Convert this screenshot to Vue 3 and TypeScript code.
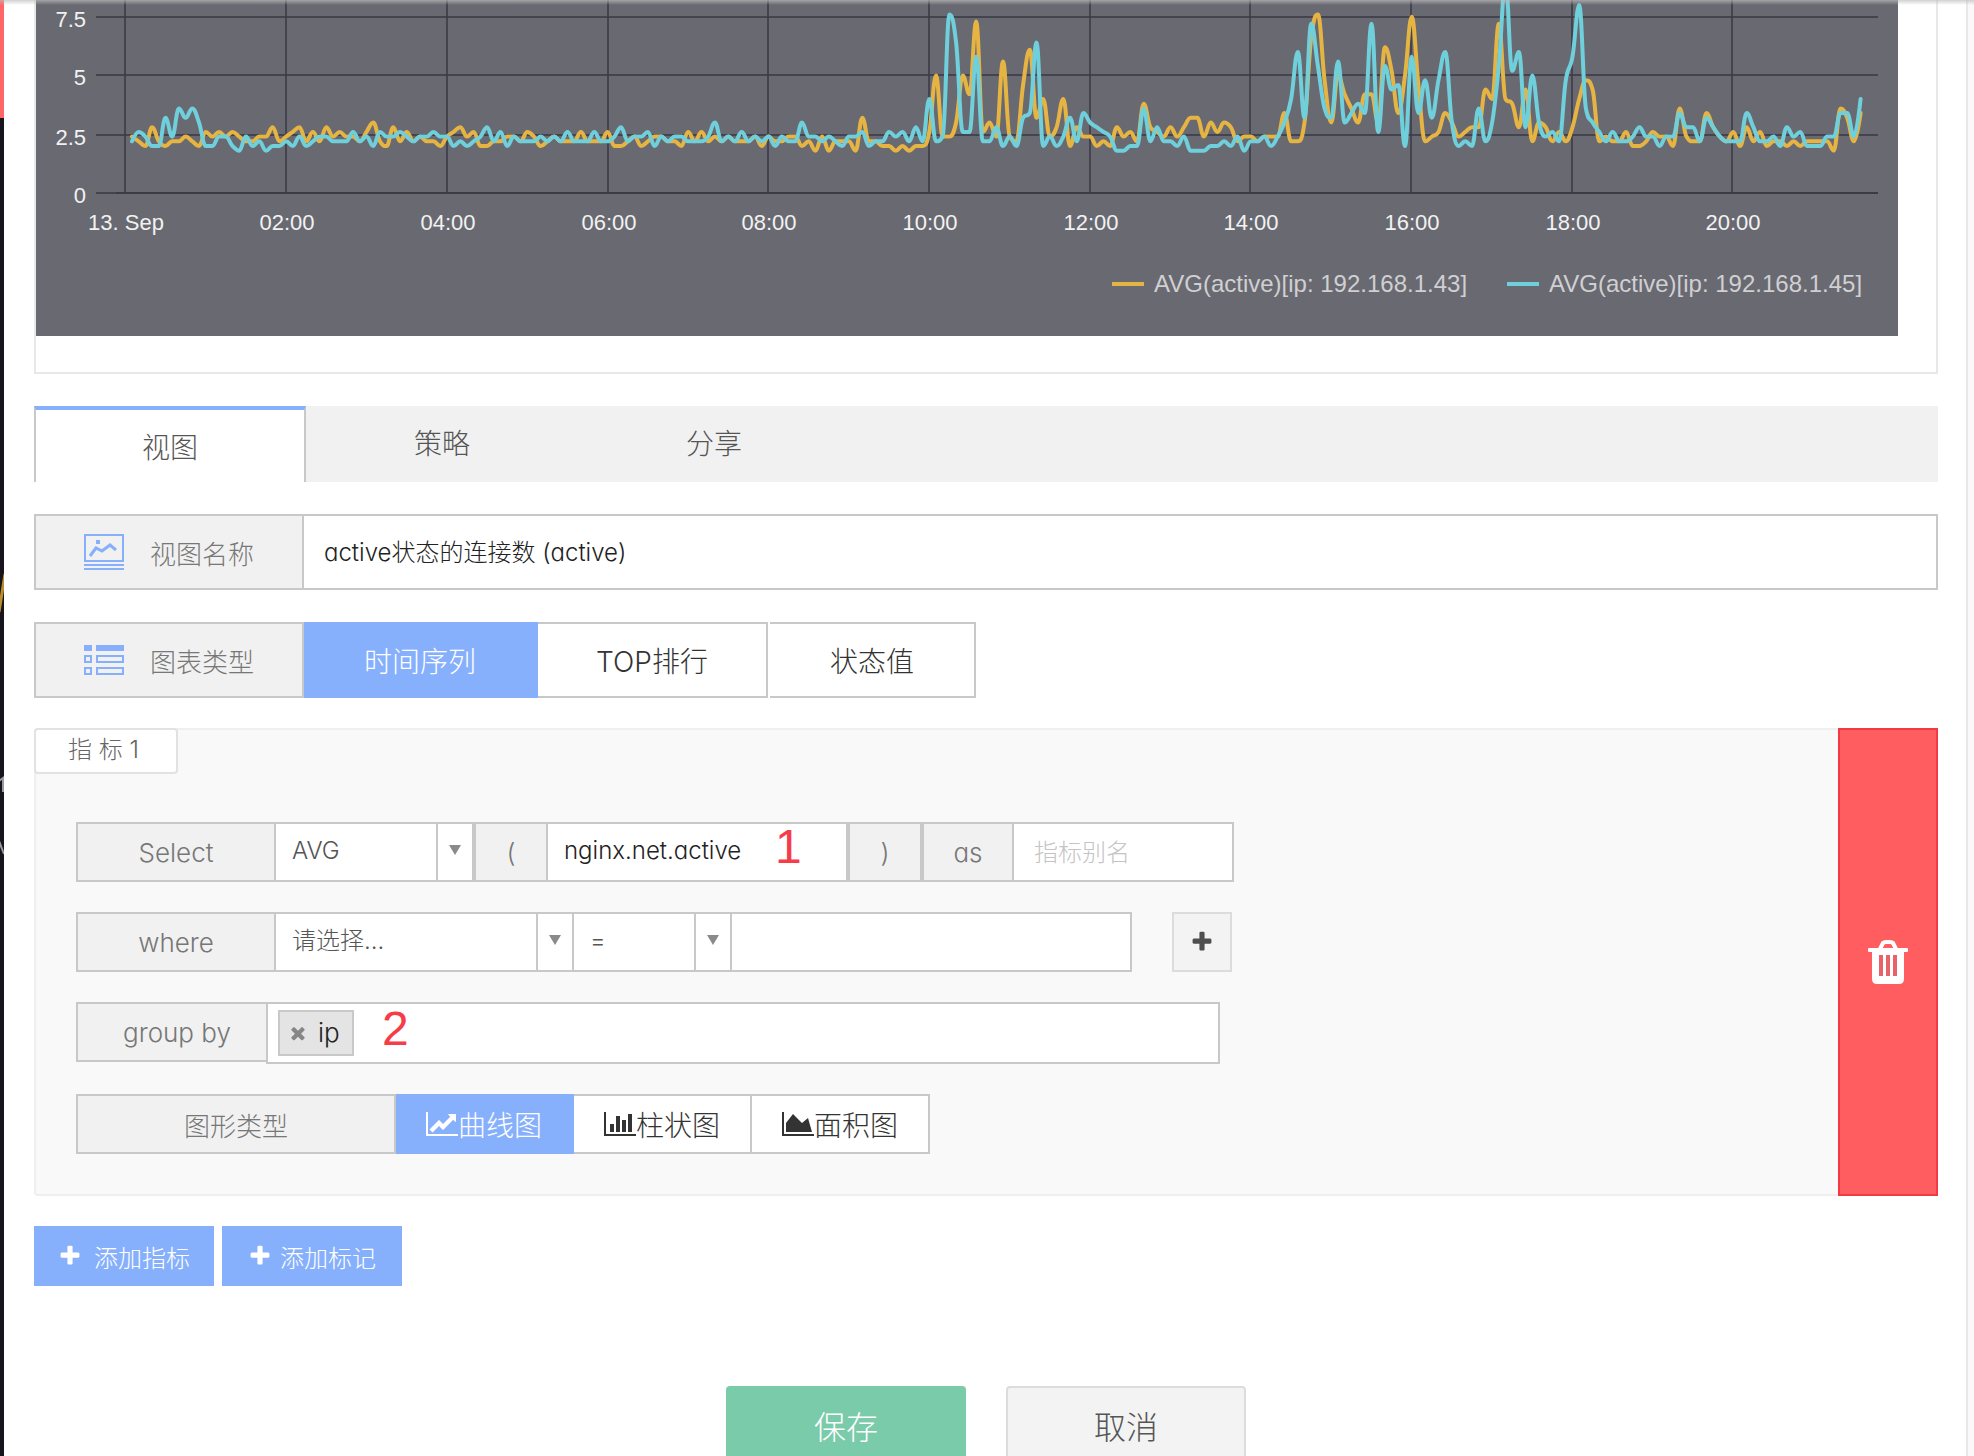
<script setup lang="ts">
import { computed, ref } from 'vue'

interface Point {
  x: number
  y: number
}

// Samples are taken every five minutes and stored in steps of 0.2.
const STEP_X = 6.7
const START_X = 132
const BASE_Y = 193
const STEP_Y = 4.7

const seriesA: number[] = [
  12, 11, 10, 14, 11, 10, 11, 11, 12, 11, 10, 13, 12, 13, 12, 13, 12, 11, 11, 12, 12, 14, 11, 12, 13, 14, 11, 13, 11, 14,
  12, 13, 12, 12, 11, 13, 15, 11, 10, 14, 11, 13, 11, 12, 11, 11, 10, 12, 13, 14, 12, 13, 10, 10, 11, 11, 12, 12, 11, 13,
  12, 10, 11, 12, 11, 11, 11, 13, 11, 11, 11, 13, 10, 10, 11, 12, 10, 11, 12, 12, 11, 11, 10, 13, 11, 13, 11, 12, 11, 12,
  11, 11, 11, 12, 10, 12, 11, 11, 12, 12, 10, 11, 9, 12, 9, 11, 11, 11, 9, 16, 11, 11, 10, 10, 9, 10, 9, 10, 10, 13,
  25, 12, 12, 15, 25, 21, 36.5, 13, 15, 12, 28, 12, 11, 23, 30.5, 16, 20, 12, 14, 20, 10, 14, 12, 12, 10, 11, 10, 14, 12, 13,
  11, 19, 14, 13, 12, 14, 12, 14, 16, 16, 12, 15, 13, 15, 14, 11, 12, 12, 11, 12, 12, 12, 17, 11, 11, 15, 33, 38, 24, 15,
  25, 21, 18, 15, 21, 21, 15, 31, 26, 17, 25, 37.5, 23, 11, 12, 13, 17, 15, 12, 13, 14, 14, 22, 20, 36, 20, 19, 14, 22, 11,
  15, 14, 11, 13, 11, 14, 20, 24, 22, 11, 12, 11, 11, 13, 10, 10, 11, 13, 12, 12, 10, 18, 12, 11, 11, 17, 14, 12, 11, 13,
  10, 14, 11, 13, 10, 11, 11, 10, 11, 10, 11, 11, 11, 11, 9, 18, 16, 11, 17,
]

const seriesB: number[] = [
  11, 13, 12, 10, 10, 16, 12, 18, 16, 18, 15, 10, 10, 12, 12, 10, 9, 12, 10, 11, 9, 10, 10, 11, 10, 12, 10, 11, 12, 12,
  11, 11, 11, 13, 11, 12, 10, 13, 12, 12, 13, 12, 11, 12, 12, 13, 12, 12, 10, 11, 10, 11, 12, 14, 11, 13, 10, 12, 11, 11,
  11, 12, 11, 12, 11, 13, 11, 11, 11, 13, 11, 11, 12, 14, 11, 12, 12, 13, 10, 12, 11, 12, 12, 11, 11, 11, 12, 15, 11, 12,
  11, 13, 11, 12, 11, 12, 10, 12, 11, 11, 15, 12, 12, 11, 12, 11, 10, 12, 12, 13, 10, 11, 11, 13, 12, 13, 11, 14, 11, 20,
  11, 12, 38, 32, 13, 13, 29, 11, 11, 14, 10, 12, 10, 16, 17, 32, 10, 12, 10, 12, 16, 11, 17, 15, 14, 13, 12, 9, 9, 10,
  10, 18, 11, 14, 11, 11, 10, 12, 9, 9, 9, 10, 10, 11, 10, 12, 9, 11, 11, 12, 10, 12, 15, 20, 30, 16, 36, 27, 18, 16,
  28, 15, 17, 19, 17, 36, 13, 27, 22, 23, 10, 29, 17, 24, 16, 24, 30, 15, 10, 11, 10, 18, 11, 15, 27, 45, 26, 30, 14, 25,
  15, 12, 13, 11, 24, 29, 40, 18, 15, 13, 11, 13, 11, 11, 12, 14, 12, 12, 10, 12, 12, 17, 14, 14, 11, 16, 14, 12, 11, 11,
  11, 17, 14, 11, 11, 12, 10, 14, 12, 13, 10, 10, 10, 12, 12, 17, 17, 12, 20,
]

// Spline whose control points never overshoot a local extreme.
function spline(values: number[]): string {
  const pts: Point[] = values.map((v, i) => ({ x: START_X + i * STEP_X, y: BASE_Y - v * STEP_Y }))
  let d = `M${pts[0].x} ${pts[0].y}`
  let out: Point = pts[0]
  for (let i = 1; i < pts.length; i++) {
    const p = pts[i]
    const prev = pts[i - 1]
    const next = pts[i + 1]
    let left: Point = p
    let right: Point = p
    if (next) {
      const lx = (1.5 * p.x + prev.x) / 2.5
      const rx = (1.5 * p.x + next.x) / 2.5
      let ly = (1.5 * p.y + prev.y) / 2.5
      let ry = (1.5 * p.y + next.y) / 2.5
      const fix = ((ry - ly) * (rx - p.x)) / (rx - lx) + p.y - ry
      ly += fix
      ry += fix
      const loL = Math.min(prev.y, p.y)
      const hiL = Math.max(prev.y, p.y)
      if (ly > hiL) { ly = hiL; ry = 2 * p.y - ly }
      else if (ly < loL) { ly = loL; ry = 2 * p.y - ly }
      const loR = Math.min(next.y, p.y)
      const hiR = Math.max(next.y, p.y)
      if (ry > hiR) { ry = hiR; ly = 2 * p.y - ry }
      else if (ry < loR) { ry = loR; ly = 2 * p.y - ry }
      left = { x: lx, y: ly }
      right = { x: rx, y: ry }
    }
    d += `C${out.x.toFixed(1)} ${out.y.toFixed(1)} ${left.x.toFixed(1)} ${left.y.toFixed(1)} ${p.x.toFixed(1)} ${p.y.toFixed(1)}`
    out = right
  }
  return d
}

const pathA = computed(() => spline(seriesA))
const pathB = computed(() => spline(seriesB))

const yTicks = [
  { label: '7.5', y: 17 },
  { label: '5', y: 75 },
  { label: '2.5', y: 135 },
  { label: '0', y: 193 },
]
const xTicks = ['13. Sep', '02:00', '04:00', '06:00', '08:00', '10:00', '12:00', '14:00', '16:00', '18:00', '20:00'].map(
  (label, i) => ({ label, x: Math.round(125.4 + i * 160.7) }),
)

const tabs = ['视图', '策略', '分享']
const activeTab = ref(0)

const chartKinds = ['时间序列', 'TOP排行', '状态值']
const activeKind = ref(0)

const shapes = [
  {
    label: '曲线图',
    path: 'M2048 1536v128h-2048v-1536h128v1408h1920zM1920 288v435q0 21-19.500 29.500t-35.500-7.500l-121-121-633 633q-10 10-23 10t-23-10l-233-233-416 416-192-192 585-585q10-10 23-10t23 10l233 233 464-464-121-121q-16-16-7.500-35.500t29.500-19.500h435q14 0 23 9t9 23z',
  },
  {
    label: '柱状图',
    path: 'M640 896v512h-256v-512h256zM1024 384v1024h-256v-1024h256zM2048 1536v128h-2048v-1536h128v1408h1920zM1408 640v768h-256v-768h256zM1792 256v1152h-256v-1152h256z',
  },
  {
    label: '面积图',
    path: 'M2048 1536v128h-2048v-1536h128v1408h1920zM1664 512l256 896h-1664v-576l448-576 576 576z',
  },
]
const activeShape = ref(0)

const plusPath =
  'M1600 736v192q0 40-28 68t-68 28h-416v416q0 40-28 68t-68 28h-192q-40 0-68-28t-28-68v-416h-416q-40 0-68-28t-28-68v-192q0-40 28-68t68-28h416v-416q0-40 28-68t68-28h192q40 0 68 28t28 68v416h416q40 0 68 28t28 68z'
const timesPath =
  'M1490 1322q0 40-28 68l-136 136q-28 28-68 28t-68-28l-294-294-294 294q-28 28-68 28t-68-28l-136-136q-28-28-28-68t28-68l294-294-294-294q-28-28-28-68t28-68l136-136q28-28 68-28t68 28l294 294 294-294q28-28 68-28t68 28l136 136q28 28 28 68t-28 68l-294 294 294 294q28 28 28 68z'

const viewName = ref('active状态的连接数 (active)')
const metric = ref('nginx.net.active')
const alias = ref('')
const filterValue = ref('')
</script>

<template>
  <div class="shell">
    <aside class="backdrop" aria-hidden="true">
      <div class="backdrop-head"></div>
      <svg class="backdrop-body" width="4" height="1338" viewBox="0 118 4 1338">
        <path d="M5 574L-1 612" stroke="#b98f2e" stroke-width="3" />
        <path d="M-1 781L3 778V792" fill="none" stroke="#9a999d" stroke-width="2" />
        <path d="M-1 841L4 854" stroke="#9a999d" stroke-width="2" />
      </svg>
    </aside>

    <main class="page">
      <section class="chart-card">
        <svg class="chart" viewBox="36 0 1862 336" role="img" aria-label="active">
          <rect x="36" y="0" width="1862" height="336" fill="#696971" />
          <g class="grid">
            <line v-for="t in yTicks" :key="t.label" x1="96" x2="1878" :y1="t.y" :y2="t.y" />
            <line v-for="t in xTicks" :key="t.label" :x1="t.x" :x2="t.x" y1="0" y2="193" />
          </g>
          <line x1="116" x2="1878" y1="193" y2="193" class="axis" />
          <path :d="pathA" class="series series-a" />
          <path :d="pathB" class="series series-b" />
          <g class="tick">
            <text v-for="t in yTicks" :key="t.label" x="86" :y="t.y + 10" text-anchor="end">{{ t.label }}</text>
            <text v-for="t in xTicks" :key="t.label" :x="t.x + 1" y="230" text-anchor="middle">{{ t.label }}</text>
          </g>
          <line x1="1112" x2="1144" y1="284" y2="284" class="series-a legend-line" />
          <text x="1154" y="292" class="legend">AVG(active)[ip: 192.168.1.43]</text>
          <line x1="1507" x2="1539" y1="284" y2="284" class="series-b legend-line" />
          <text x="1549" y="292" class="legend">AVG(active)[ip: 192.168.1.45]</text>
        </svg>
      </section>

      <nav class="tabs" role="tablist">
        <button
          v-for="(tab, i) in tabs"
          :key="tab"
          type="button"
          role="tab"
          class="tab"
          :class="{ active: i === activeTab }"
          :aria-selected="i === activeTab"
          @click="activeTab = i"
        >{{ tab }}</button>
      </nav>

      <div class="field">
        <label class="field-label" for="view-name">
          <svg class="field-icon" width="40" height="36" viewBox="0 0 40 36" fill="none" stroke="#87b0fc" stroke-width="2">
            <path d="M1 1H39V27H1zM0 31H40M0 35H40" />
            <path d="M6 22L12 14L18 17L26 11L32 16" stroke-width="3" />
            <rect x="12" y="6" width="4" height="4" fill="#87b0fc" stroke="none" />
          </svg>
          视图名称
        </label>
        <input id="view-name" v-model="viewName" class="field-input" type="text" />
      </div>

      <div class="field" role="group" aria-labelledby="kind-label">
        <span id="kind-label" class="field-label">
          <svg class="field-icon" width="40" height="30" viewBox="0 0 40 30" fill="none" stroke="#87b0fc" stroke-width="2">
            <path d="M0 0H8V6H0zM12 0H40V6H12z" fill="#87b0fc" stroke="none" />
            <path d="M1 11H7V17H1zM13 11H39V17H13zM1 23H7V29H1zM13 23H39V29H13z" />
          </svg>
          图表类型
        </span>
        <button
          v-for="(kind, i) in chartKinds"
          :key="kind"
          type="button"
          class="option kind"
          :class="[`kind-${i}`, { active: i === activeKind }]"
          @click="activeKind = i"
        >{{ kind }}</button>
      </div>

      <section class="metric">
        <div class="metric-body">
          <h2 class="metric-title">指 标 1</h2>
          <div class="rows">
            <div class="row">
              <label class="addon w-label" for="agg">Select</label>
              <span class="select w-agg">
                <select id="agg"><option>AVG</option></select>
                <svg class="arrow" width="12" height="10" viewBox="0 0 12 10"><path d="M0 0H12L6 10z" fill="#8a8a8a" /></svg>
              </span>
              <span class="addon w-paren">(</span>
              <span class="noted">
                <input v-model="metric" class="control w-metric" type="text" aria-label="metric" />
                <span class="note note-one">1</span>
              </span>
              <span class="addon w-paren">)</span>
              <label class="addon w-as" for="alias">as</label>
              <input id="alias" v-model="alias" class="control w-alias" type="text" placeholder="指标别名" />
            </div>

            <div class="row">
              <label class="addon w-label" for="where">where</label>
              <span class="select w-where">
                <select id="where"><option>请选择...</option></select>
                <svg class="arrow" width="12" height="10" viewBox="0 0 12 10"><path d="M0 0H12L6 10z" fill="#8a8a8a" /></svg>
              </span>
              <span class="select w-op">
                <select aria-label="operator"><option>=</option></select>
                <svg class="arrow" width="12" height="10" viewBox="0 0 12 10"><path d="M0 0H12L6 10z" fill="#8a8a8a" /></svg>
              </span>
              <input v-model="filterValue" class="control w-value" type="text" aria-label="value" />
              <button type="button" class="add-filter" aria-label="add">
                <svg width="24" height="24" viewBox="0 0 1792 1792"><path :d="plusPath" fill="#4f4f4f" /></svg>
              </button>
            </div>

            <div class="row">
              <label class="addon w-group" for="group-by">group by</label>
              <div class="tag-box noted">
                <span class="tag">
                  <button type="button" class="tag-remove" aria-label="remove">
                    <svg width="20" height="20" viewBox="0 0 1792 1792"><path :d="timesPath" fill="#868686" /></svg>
                  </button>
                  ip
                </span>
                <input id="group-by" class="tag-input" type="text" />
                <span class="note note-two">2</span>
              </div>
            </div>

            <div class="row" role="group" aria-labelledby="shape-label">
              <span id="shape-label" class="addon w-shape">图形类型</span>
              <button
                v-for="(shape, i) in shapes"
                :key="shape.label"
                type="button"
                class="option shape"
                :class="{ active: i === activeShape }"
                @click="activeShape = i"
              >
                <svg width="32" height="28" viewBox="0 0 2048 1792"><path :d="shape.path" fill="currentColor" /></svg>{{ shape.label }}
              </button>
            </div>
          </div>
        </div>
        <button type="button" class="remove-metric" aria-label="delete">
          <svg width="40" height="44" viewBox="0 0 40 44">
            <path d="M12 9L15 3Q16 2 18 2H22Q24 2 25 3L28 9" fill="none" stroke="#fff" stroke-width="4" />
            <rect x="0" y="8" width="40" height="4" rx="1" fill="#fff" />
            <path d="M4 10H36V39Q36 44 31 44H9Q4 44 4 39z" fill="#fff" />
            <path d="M11 15h4v21h-4zM18 15h4v21h-4zM25 15h4v21h-4z" fill="#e96268" />
          </svg>
        </button>
      </section>

      <div class="adders">
        <button type="button" class="adder wide-gap">
          <svg width="24" height="24" viewBox="0 0 1792 1792"><path :d="plusPath" fill="#fff" /></svg>添加指标
        </button>
        <button type="button" class="adder">
          <svg width="24" height="24" viewBox="0 0 1792 1792"><path :d="plusPath" fill="#fff" /></svg>添加标记
        </button>
      </div>

      <footer class="actions">
        <button type="button" class="action save">保存</button>
        <button type="button" class="action cancel">取消</button>
      </footer>
    </main>
    <div class="gutter"></div>
    <div class="top-shade"></div>
  </div>
</template>

<style>
body {
  margin: 0;
  background: #fff;
}
</style>

<style scoped>
.shell {
  position: relative;
  display: flex;
  height: 100vh;
  overflow: hidden;
  font-family: Inter, 'Noto Sans CJK SC', sans-serif;
  font-feature-settings: 'cv11';
  font-weight: 300;
}

.shell *,
.shell *::before,
.shell *::after {
  box-sizing: border-box;
}

button,
input,
select {
  margin: 0;
  padding: 0;
  border: 0;
  border-radius: 0;
  background: none;
  font: inherit;
  font-feature-settings: inherit;
  color: inherit;
  outline: none;
}

button {
  cursor: pointer;
}

svg {
  display: block;
  flex: none;
}

.backdrop {
  display: flex;
  flex: none;
  flex-direction: column;
  width: 4px;
  overflow: hidden;
  background: #17141b;
}

.backdrop-head {
  flex: none;
  height: 118px;
  background: #ff6668;
}

.page {
  flex: 1;
  min-width: 0;
  padding: 0 28px 0 30px;
  border-right: 2px solid #e8e8e8;
  background: #fff;
}

.gutter {
  flex: none;
  width: 6px;
  background: #f9f9f9;
}

.top-shade {
  position: absolute;
  top: 0;
  left: 0;
  right: 0;
  height: 5px;
  background: linear-gradient(rgba(190, 190, 190, 0.7), rgba(190, 190, 190, 0));
}

.chart-card {
  padding: 0 38px 36px 0;
  border: 2px solid #e8e8e8;
  border-top: 0;
}

.chart {
  width: 100%;
  height: auto;
  font-family: 'Liberation Sans', Arial, sans-serif;
  font-weight: 400;
}

.grid line {
  stroke: #3c3c49;
  stroke-width: 2;
  opacity: 0.8;
}

.axis {
  stroke: #3c3c49;
  stroke-width: 2;
}

.series {
  fill: none;
  stroke-width: 4;
  stroke-linejoin: round;
  stroke-linecap: round;
}

.series-a {
  stroke: #e6b443;
}

.series-b {
  stroke: #6fcfdb;
}

.legend-line {
  stroke-width: 4;
}

.tick {
  fill: #f2f2f2;
  font-size: 22px;
}

.legend {
  fill: #d0d0d2;
  font-size: 24px;
}

.tabs {
  display: flex;
  margin-top: 32px;
  background: #f1f1f1;
}

.tab {
  width: 272px;
  height: 76px;
  line-height: 76px;
  font-size: 28px;
  color: #555;
}

.tab.active {
  padding-top: 4px;
  border: 2px solid #c8c8c8;
  border-top: 4px solid #87b0fc;
  border-bottom: 0;
  line-height: 68px;
  background: #fff;
}

.field {
  display: flex;
  height: 76px;
  margin-top: 32px;
}

.field-label {
  display: flex;
  flex: none;
  align-items: center;
  gap: 26px;
  width: 270px;
  padding-left: 48px;
  border: 2px solid #c8c8c8;
  background: #f1f1f1;
  font-size: 26px;
  color: #777;
}

.field-input {
  flex: 1;
  min-width: 0;
  padding: 0 20px 4px;
  border: 2px solid #c8c8c8;
  border-left: 0;
  font-size: 24px;
  color: #222;
}

.option {
  border: 2px solid #c8c8c8;
  border-left: 0;
  background: #fff;
  font-size: 28px;
  color: #333;
}

.option.active {
  border-color: #87b0fc;
  background: #87b0fc;
  color: #fff;
}

.kind-0 {
  width: 234px;
}

.kind-1 {
  width: 230px;
}

.kind-2 {
  width: 206px;
  margin-left: 2px;
}

.metric {
  display: flex;
  margin-top: 30px;
}

.metric-body {
  flex: 1;
  min-width: 0;
  border: 2px solid #efefef;
  border-right: 0;
  border-radius: 4px 0 0 4px;
  background: #f9f9f9;
}

.metric-title {
  width: 144px;
  height: 46px;
  margin: -2px 0 0 -2px;
  padding-left: 32px;
  border: 2px solid #e2e2e2;
  border-radius: 4px;
  background: #fff;
  font-size: 24px;
  font-weight: 300;
  line-height: 40px;
  color: #666;
}

.rows {
  display: flex;
  flex-direction: column;
  gap: 30px;
  padding: 48px 40px 40px;
}

.row {
  display: flex;
}

.addon {
  display: flex;
  flex: none;
  align-items: center;
  justify-content: center;
  height: 60px;
  border: 2px solid #c8c8c8;
  background: #f1f1f1;
  font-size: 26px;
  color: #777;
}

.control {
  height: 60px;
  padding: 0 16px 4px;
  border: 2px solid #c8c8c8;
  border-left: 0;
  background: #fff;
  font-size: 24px;
  color: #222;
}

.control::placeholder {
  color: #c4c4c4;
  opacity: 1;
}

.select {
  display: grid;
  grid-template-columns: 1fr 36px;
  align-items: center;
  height: 60px;
  border: 2px solid #c8c8c8;
  border-left: 0;
  background: #fff;
}

.select select {
  grid-area: 1 / 1 / 2 / 3;
  width: 100%;
  height: 56px;
  padding: 0 16px 4px;
  appearance: none;
  font-size: 24px;
  color: #555;
}

.select .arrow {
  grid-area: 1 / 2 / 2 / 3;
  box-sizing: content-box;
  justify-self: stretch;
  width: 12px;
  padding: 21px 11px 25px;
  border-left: 2px solid #c8c8c8;
  pointer-events: none;
}

.w-label {
  width: 200px;
}

.w-agg {
  width: 198px;
}

.w-paren {
  width: 74px;
}

.w-metric {
  width: 300px;
}

.w-as {
  width: 92px;
}

.w-alias {
  width: 220px;
  padding: 0 20px;
}

.w-where {
  width: 298px;
}

.w-op {
  width: 158px;
}

.w-value {
  width: 400px;
}

.w-group {
  width: 190px;
  padding-left: 10px;
  border-right: 0;
}

.w-shape {
  width: 320px;
}

.add-filter {
  display: flex;
  align-items: center;
  justify-content: center;
  width: 60px;
  height: 60px;
  margin-left: 40px;
  border: 2px solid #dcdcdc;
  background: #f3f3f3;
}

.tag-box {
  display: flex;
  align-items: center;
  width: 954px;
  height: 62px;
  padding: 0 10px;
  border: 2px solid #c8c8c8;
  background: #fff;
}

.tag {
  display: flex;
  align-items: center;
  gap: 10px;
  width: 76px;
  height: 46px;
  padding: 0 8px;
  border: 2px solid #c8c8c8;
  background: #e4e4e4;
  font-size: 26px;
  line-height: 40px;
  color: #222;
}

.tag-input {
  flex: 1;
  min-width: 0;
  height: 46px;
}

.noted {
  position: relative;
}

.note {
  position: absolute;
  top: 0;
  font-family: 'Liberation Sans', Arial, sans-serif;
  font-size: 48px;
  font-weight: 400;
  line-height: 50px;
  color: #f63c48;
  pointer-events: none;
}

.note-one {
  left: 227px;
}

.note-two {
  left: 114px;
}

.shape {
  display: flex;
  align-items: center;
  justify-content: center;
  width: 178px;
  height: 60px;
}

.remove-metric {
  display: flex;
  flex: none;
  align-items: center;
  justify-content: center;
  width: 100px;
  border: 2px solid #f23a42;
  background: #ff5d60;
}

.adders {
  display: flex;
  gap: 8px;
  margin-top: 30px;
}

.adder {
  display: flex;
  align-items: center;
  justify-content: center;
  gap: 8px;
  width: 180px;
  height: 60px;
  background: #87b0fc;
  font-size: 24px;
  color: #fff;
}

.wide-gap {
  gap: 12px;
}

.actions {
  display: flex;
  justify-content: center;
  gap: 40px;
  margin-top: 100px;
}

.action {
  width: 240px;
  height: 78px;
  border-radius: 4px;
  font-size: 32px;
}

.save {
  background: #7acbaa;
  color: #fff;
}

.cancel {
  border: 2px solid #dcdcdc;
  background: #f3f3f3;
  color: #555;
}
</style>
